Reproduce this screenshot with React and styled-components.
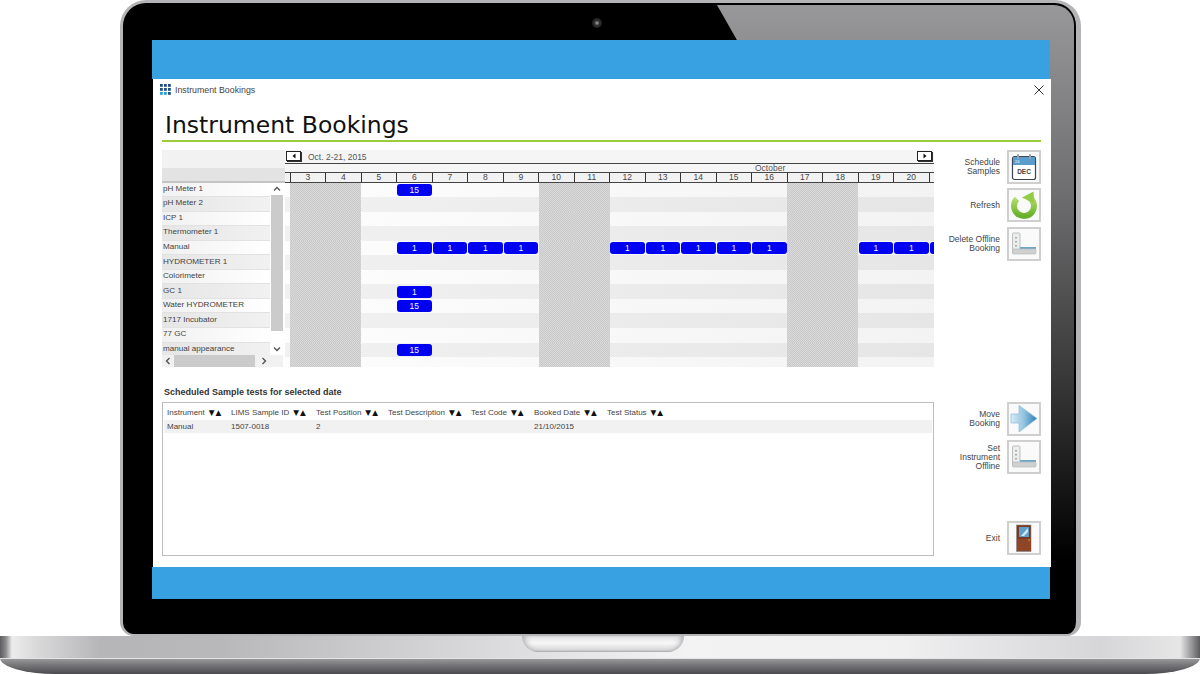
import React from "react";
import styled, { createGlobalStyle } from "styled-components";

const GlobalStyle = createGlobalStyle`
  html, body { margin: 0; padding: 0; background: #fff; }
  body { width: 1200px; height: 674px; overflow: hidden; font-family: "Liberation Sans", Arial, sans-serif; }
  * { box-sizing: border-box; }
`

const Page = styled.div`
  width: 1200px;
  height: 674px;
  display: flex;
  flex-direction: column;
`

const Lid = styled.div`
  position: relative;
  width: 961px;
  height: 636px;
  margin-left: 120px;
  padding: 37px 0 0 29px;
  background: #000;
  border: solid #b4b4b6;
  border-width: 3px 5px 2px 3px;
  border-radius: 26px 26px 14px 14px;
`

const Glare = styled.div`
  position: absolute;
  inset: 2px 2px 0 0;
  border-radius: 20px 20px 10px 10px;
  background: linear-gradient(180deg, #98989b 0%, #6e6e70 30%, #333 62%, #000 88%);
  clip-path: polygon(594px 0, 100% 0, 100% 100%);
`

const Camera = styled.div`
  position: absolute;
  left: 469px;
  top: 15px;
  width: 10px;
  height: 10px;
  border-radius: 50%;
  background: radial-gradient(circle, #888 0 12%, #333 35%, #1c1c1c 75%);
`

const Screen = styled.div`
  position: relative;
  width: 898px;
  height: 559px;
  display: flex;
  flex-direction: column;
`

const BlueBand = styled.div`
  height: ${(p) => p.$h}px;
  background: #38a1e2;
`

const AppWindow = styled.div`
  flex: 1;
  margin: 0 -1px 0 1px;
  padding: 0 10px 0 9px;
  background: #fff;
  display: flex;
  flex-direction: column;
`

const TitleBar = styled.div`
  height: 22px;
  display: flex;
  align-items: center;
  gap: 4px;
  margin-left: -2px;
  padding-bottom: 1px;
  font-size: 8.8px;
  color: #444;
`

const CloseBtn = styled.svg`
  margin-left: auto;
  margin-right: -3px;
  width: 10px;
  height: 10px;
`

const Heading = styled.h1`
  height: 41px;
  margin: 0;
  padding: 9px 0 0 3px;
  font: 400 23.5px/30px "DejaVu Sans", Verdana, sans-serif;
  color: #111;
  border-bottom: 2px solid #9ccb3b;
`

const Body = styled.div`
  flex: 1;
  display: flex;
  margin-top: 8px;
`

const Main = styled.div`
  width: 772px;
  display: flex;
  flex-direction: column;
`

const Calendar = styled.div`
  height: 217px;
  display: flex;
`

const LeftCol = styled.div`
  width: 123px;
  display: flex;
  flex-direction: column;
`

const TopBlock = styled.div`
  height: 18px;
  background: #f2f2f2;
`

const SubBlock = styled.div`
  height: 14.5px;
  background: #e3e3e3;
  border-bottom: 2px solid #c4c4c4;
`

const ListArea = styled.div`
  height: 172.5px;
  display: flex;
  overflow: hidden;
`

const Labels = styled.div`
  width: 108px;
  flex: none;
`

const LabelRow = styled.div`
  height: 14.55px;
  padding: 0 0 2px 1px;
  display: flex;
  align-items: center;
  font-size: 8.1px;
  color: #444;
  white-space: nowrap;
  border-bottom: 1px solid #e2e2e2;
  background: ${(p) =>
    p.$odd
      ? "linear-gradient(90deg, #e6e6e6, #f1f1f1)"
      : "linear-gradient(90deg, #f1f1f1, #fff)"};
`

const VScroll = styled.div`
  width: 12px;
  margin-left: 1px;
  display: flex;
  flex-direction: column;
  align-items: center;
`

const ScrollBtn = styled.div`
  flex: none;
  width: 12px;
  height: 12px;
  display: flex;
  align-items: center;
  justify-content: center;
  color: #555;
`

const VThumb = styled.div`
  flex: 1;
  width: 12px;
  margin-bottom: 12px;
  background: #cbcbcb;
`

const HScroll = styled.div`
  height: 12px;
  width: 121px;
  display: flex;
  background: #f1f1f1;
`

const HThumb = styled.div`
  width: 81px;
  margin-right: 3px;
  background: #cbcbcb;
`

const RightCol = styled.div`
  width: 649px;
  overflow: hidden;
  display: flex;
  flex-direction: column;
`

const NavBar = styled.div`
  height: 13.5px;
  display: flex;
  align-items: flex-start;
  padding: 1px 2px 0 1px;
  background: #f5f5f5;
  border-bottom: 1px solid #444;
  font-size: 8.5px;
  color: #555;
`

const NavText = styled.span`
  margin: 1px 0 0 7px;
`

const NavBtn = styled.div`
  width: 15px;
  height: 10px;
  margin-left: ${(p) => (p.$right ? "auto" : "0")};
  display: flex;
  align-items: center;
  justify-content: center;
  background: #fff;
  border: 1px solid #222;
  box-shadow: 1px 1px 0 #333;
`

const MonthRow = styled.div`
  height: 8.5px;
  padding-left: 470px;
  font-size: 8.5px;
  line-height: 9px;
  color: #555;
  background: #f5f5f5;
`

const DaysRow = styled.div`
  height: 10.5px;
  display: grid;
  grid-template-columns: repeat(19, 35.5px);
  padding-left: 4.5px;
  background: #f2f2f2;
  border-top: 1px solid #444;
  border-bottom: 1px solid #444;
`

const DayHead = styled.div`
  border-left: 1px solid #333;
  text-align: center;
  font-size: 8.5px;
  line-height: 9px;
  color: #444;
`

const GridRow = styled.div`
  height: ${(p) => p.$h}px;
  display: grid;
  grid-template-columns: repeat(19, 35.5px);
  padding-left: 5px;
  background: ${(p) =>
    p.$odd
      ? "linear-gradient(90deg, #f1f1f1, #e6e6e6)"
      : "linear-gradient(90deg, #fdfdfd, #f3f3f3)"};
`

const DayCell = styled.div`
  display: flex;
  align-items: center;
  justify-content: center;
  background: ${(p) =>
    p.$weekend
      ? "repeating-conic-gradient(#c9c9c9 0 25%, #dadada 0 50%) 0 0 / 2px 2px"
      : "transparent"};
`

const Chip = styled.div`
  width: 34.5px;
  height: 12px;
  border-radius: 3px;
  background: #0000f2;
  color: #f0f2ff;
  font-size: 8.5px;
  line-height: 12px;
  text-align: center;
`

const SectionTitle = styled.div`
  margin: 19px 0 4px 2px;
  font-size: 9px;
  line-height: 12px;
  font-weight: 700;
  color: #333;
`

const TableBox = styled.div`
  height: 154px;
  padding: 1px 1px;
  border: 1.5px solid #bdbdbd;
`

const TableRow = styled.div`
  display: grid;
  grid-template-columns: 64px 85px 72px 83px 63px 73px 1fr;
  height: ${(p) => p.$h}px;
  padding-left: 3px;
  align-items: center;
  font-size: 8px;
  color: #444;
  background: ${(p) => (p.$shade ? "#f1f1f1" : "#fff")};
  white-space: nowrap;
`

const SortMark = styled.span`
  margin-left: 4px;
  font: 7.5px "DejaVu Sans", sans-serif;
  letter-spacing: 1px;
  color: #111;
`

const Side = styled.div`
  flex: 1;
  display: flex;
  flex-direction: column;
`

const SideItem = styled.div`
  height: 34px;
  margin-top: ${(p) => p.$mt}px;
  display: flex;
  align-items: center;
  justify-content: flex-end;
  gap: 7px;
`

const SideLabel = styled.div`
  text-align: right;
  font-size: 8.5px;
  line-height: 9px;
  color: #444;
`

const IconBtn = styled.div`
  flex: none;
  width: 34px;
  height: 34px;
  padding: 1px;
  background: #fafafa;
  border: 2px solid #cfcfcf;
`

const Base = styled.div`
  position: relative;
  flex: 1;
  display: flex;
  flex-direction: column;
`

const BaseTop = styled.div`
  height: 22px;
  background: linear-gradient(
    90deg,
    #5c5c5e 0,
    #8d8d8f 6px,
    #ececed 12px,
    #dadadb 35px,
    #b6b6b9 100px,
    #b8b8bb 220px,
    #cfcfd1 400px,
    #dedee0 520px,
    #f3f3f4 690px,
    #f0f0f1 900px,
    #d6d6d8 1100px,
    #e6e6e7 1180px,
    #8d8d8f 1193px,
    #5c5c5e 1200px
  );
`

const BaseBottom = styled.div`
  flex: 1;
  border-top: 1px solid #e4e4e6;
  border-radius: 0 0 55px 55px / 0 0 16px 16px;
  background: linear-gradient(180deg, #98989b, #77777a 40%, #4b4b4f);
`

const Notch = styled.div`
  position: absolute;
  left: 522px;
  top: 0;
  width: 162px;
  height: 16px;
  border-radius: 0 0 16px 16px;
  background: linear-gradient(180deg, #e4e4e5, #f7f7f8 45%, #d8d8da 88%, #a9a9ac);
  box-shadow: inset 6px 0 6px -4px #a8a8ab, inset -6px 0 6px -4px #a8a8ab;
`

const labels = [
  "pH Meter 1",
  "pH Meter 2",
  "ICP 1",
  "Thermometer 1",
  "Manual",
  "HYDROMETER 1",
  "Colorimeter",
  "GC 1",
  "Water HYDROMETER",
  "1717 Incubator",
  "77 GC",
  "manual appearance",
];

const days = [3, 4, 5, 6, 7, 8, 9, 10, 11, 12, 13, 14, 15, 16, 17, 18, 19, 20, 21];
const weekends = [3, 4, 10, 11, 17, 18];
const lastVisibleDay = 20; // 21 only peeks in at the right edge, its number is never seen

const manualDays = {};
[6, 7, 8, 9, 12, 13, 14, 15, 16, 19, 20, 21].forEach((d) => (manualDays[d] = 1));

const bookings = {
  0: { 6: 15 },
  4: manualDays,
  7: { 6: 1 },
  8: { 6: 15 },
  11: { 6: 15 },
};

const columns = [
  "Instrument",
  "LIMS Sample ID",
  "Test Position",
  "Test Description",
  "Test Code",
  "Booked Date",
  "Test Status",
];

const Chevron = ({ d }) => (
  <svg width="8" height="8" viewBox="0 0 8 8" fill="none" stroke="#555" strokeWidth="1.4">
    <path d={d} />
  </svg>
);

const Triangle = ({ d }) => (
  <svg width="6" height="6" viewBox="0 0 6 6">
    <path d={d} fill="#111" />
  </svg>
);

const AppGlyph = () => (
  <svg width="11" height="11" viewBox="0 0 11 11">
    {[0, 4, 8].map((y) =>
      [0, 4, 8].map((x) => (
        <rect key={`${x}-${y}`} x={x} y={y} width="2.8" height="2.8" fill={y === 8 && x < 8 ? "#2f9fd8" : "#1f4f86"} />
      ))
    )}
  </svg>
);

const CalendarIcon = () => (
  <svg width="28" height="28" viewBox="0 0 28 28">
    <rect x="2.5" y="3.5" width="23" height="23" rx="2" fill="#fff" stroke="#3c4650" strokeWidth="1.2" />
    <rect x="3" y="4" width="22" height="8" fill="#5a9ccb" />
    <rect x="7" y="1" width="2" height="5" rx="1" fill="#9aa3aa" />
    <rect x="19" y="1" width="2" height="5" rx="1" fill="#9aa3aa" />
    <text x="5" y="10" fontSize="4" fontFamily="Liberation Sans" fill="#fff">24</text>
    <text x="14" y="21" fontSize="6.5" fontWeight="700" fontFamily="Liberation Sans" textAnchor="middle" fill="#444">DEC</text>
  </svg>
);

const RefreshIcon = () => (
  <svg width="28" height="28" viewBox="0 0 28 28">
    <defs>
      <linearGradient id="grn" x1="0" y1="0" x2="0" y2="1">
        <stop offset="0" stopColor="#b8e070" />
        <stop offset="1" stopColor="#68b02a" />
      </linearGradient>
    </defs>
    <path d="M6.9 7.9 A10 10 0 1 0 19 6.3" fill="none" stroke="url(#grn)" strokeWidth="6" />
    <path d="M12 6.5 L23.5 0.5 L24.5 12.5 Z" fill="#93cc48" />
  </svg>
);

const OfflineIcon = () => (
  <svg width="28" height="28" viewBox="0 0 28 28">
    <rect x="2.5" y="3" width="7.5" height="20" rx="1" fill="#eceeee" stroke="#bdbfc0" />
    <rect x="5" y="7" width="2" height="1.5" fill="#a8aaab" />
    <rect x="5" y="11" width="2" height="1.5" fill="#a8aaab" />
    <rect x="5" y="15" width="2" height="1.5" fill="#a8aaab" />
    <rect x="10" y="17" width="16" height="2" fill="#6ea6c6" />
    <rect x="2.5" y="19" width="23.5" height="5" rx="1" fill="#cfd1d1" stroke="#b8babb" strokeWidth="0.7" />
  </svg>
);

const ArrowIcon = () => (
  <svg width="28" height="28" viewBox="0 0 28 28">
    <defs>
      <linearGradient id="arw" x1="0" y1="0" x2="1" y2="0">
        <stop offset="0" stopColor="#d8ebf6" />
        <stop offset="0.5" stopColor="#93c3e0" />
        <stop offset="1" stopColor="#2a7db6" />
      </linearGradient>
    </defs>
    <path d="M1 9 H9 V0.5 L27 13.5 L9 27 V18 H1 Z" fill="url(#arw)" stroke="#8cbcdb" strokeWidth="0.7" />
  </svg>
);

const DoorIcon = () => (
  <svg width="28" height="28" viewBox="0 0 28 28">
    <rect x="6.5" y="1" width="14.5" height="26.5" fill="#7a3a22" stroke="#8a8a8a" strokeWidth="0.6" />
    <rect x="7" y="15" width="14" height="12" fill="#8f4528" />
    <rect x="9" y="3" width="10" height="10" fill="#5f9ec9" />
    <path d="M11 12 L18 4 V8 L14 12 Z" fill="#cfe8f7" />
    <circle cx="19" cy="16" r="0.8" fill="#d9a441" />
  </svg>
);

const sideItems = [
  { mt: 0, label: ["Schedule", "Samples"], icon: <CalendarIcon /> },
  { mt: 4, label: ["Refresh"], icon: <RefreshIcon /> },
  { mt: 5, label: ["Delete Offline", "Booking"], icon: <OfflineIcon /> },
  { mt: 141, label: ["Move", "Booking"], icon: <ArrowIcon /> },
  { mt: 4, label: ["Set", "Instrument", "Offline"], icon: <OfflineIcon /> },
  { mt: 47, label: ["Exit"], icon: <DoorIcon /> },
];

const App = () => {
  return (
    <Page>
      <GlobalStyle />
      <Lid>
        <Glare />
        <Camera />
        <Screen>
          <BlueBand $h={39} />
          <AppWindow>
            <TitleBar>
              <AppGlyph />
              Instrument Bookings
              <CloseBtn viewBox="0 0 10 10">
                <path d="M0.5 0.5 L9.5 9.5 M9.5 0.5 L0.5 9.5" stroke="#333" strokeWidth="1" />
              </CloseBtn>
            </TitleBar>
            <Heading>Instrument Bookings</Heading>
            <Body>
              <Main>
                <Calendar>
                  <LeftCol>
                    <TopBlock />
                    <SubBlock />
                    <ListArea>
                      <Labels>
                        {labels.map((l, i) => (
                          <LabelRow key={l} $odd={i % 2 === 1}>{l}</LabelRow>
                        ))}
                      </Labels>
                      <VScroll>
                        <ScrollBtn><Chevron d="M1 5.5 L4 2.5 L7 5.5" /></ScrollBtn>
                        <VThumb />
                        <ScrollBtn><Chevron d="M1 2.5 L4 5.5 L7 2.5" /></ScrollBtn>
                      </VScroll>
                    </ListArea>
                    <HScroll>
                      <ScrollBtn><Chevron d="M5.5 1 L2.5 4 L5.5 7" /></ScrollBtn>
                      <HThumb />
                      <ScrollBtn><Chevron d="M2.5 1 L5.5 4 L2.5 7" /></ScrollBtn>
                    </HScroll>
                  </LeftCol>
                  <RightCol>
                    <NavBar>
                      <NavBtn><Triangle d="M4.5 0.5 V5.5 L1.5 3 Z" /></NavBtn>
                      <NavText>Oct. 2-21, 2015</NavText>
                      <NavBtn $right><Triangle d="M1.5 0.5 V5.5 L4.5 3 Z" /></NavBtn>
                    </NavBar>
                    <MonthRow>October</MonthRow>
                    <DaysRow>
                      {days.map((d) => (
                        <DayHead key={d}>{d <= lastVisibleDay ? d : ""}</DayHead>
                      ))}
                    </DaysRow>
                    {labels.map((l, i) => (
                      <GridRow key={l} $h={14.55} $odd={i % 2 === 1}>
                        {days.map((d) => (
                          <DayCell key={d} $weekend={weekends.includes(d)}>
                            {bookings[i] && bookings[i][d] ? (
                              <Chip>{d <= lastVisibleDay ? bookings[i][d] : ""}</Chip>
                            ) : null}
                          </DayCell>
                        ))}
                      </GridRow>
                    ))}
                    <GridRow $h={10} $odd={false}>
                      {days.map((d) => (
                        <DayCell key={d} $weekend={weekends.includes(d)} />
                      ))}
                    </GridRow>
                  </RightCol>
                </Calendar>
                <SectionTitle>Scheduled Sample tests for selected date</SectionTitle>
                <TableBox>
                  <TableRow $h={16}>
                    {columns.map((c) => (
                      <span key={c}>
                        {c}
                        <SortMark>▼▲</SortMark>
                      </span>
                    ))}
                  </TableRow>
                  <TableRow $h={13} $shade>
                    <span>Manual</span>
                    <span>1507-0018</span>
                    <span>2</span>
                    <span />
                    <span />
                    <span>21/10/2015</span>
                    <span />
                  </TableRow>
                </TableBox>
              </Main>
              <Side>
                {sideItems.map((item) => (
                  <SideItem key={item.label.join(" ")} $mt={item.mt}>
                    <SideLabel>
                      {item.label.map((t) => (
                        <div key={t}>{t}</div>
                      ))}
                    </SideLabel>
                    <IconBtn>{item.icon}</IconBtn>
                  </SideItem>
                ))}
              </Side>
            </Body>
          </AppWindow>
          <BlueBand $h={32} />
        </Screen>
      </Lid>
      <Base>
        <BaseTop />
        <BaseBottom />
        <Notch />
      </Base>
    </Page>
  );
};

export default App;
